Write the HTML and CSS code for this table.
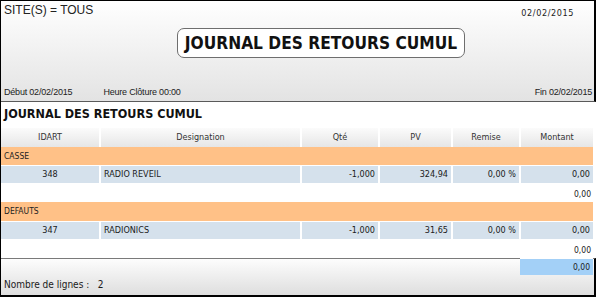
FILE: index.html
```html
<!DOCTYPE html>
<html lang="fr">
<head>
<meta charset="utf-8">
<title>Journal des retours cumul</title>
<link rel="stylesheet" href="styles.css">
</head>
<body>
<div class="frame">
  <header class="head">
    <div class="head-top">
      <span class="site">SITE(S) = TOUS</span>
      <span class="date">02/02/2015</span>
    </div>
    <div class="title-box">JOURNAL DES RETOURS CUMUL</div>
    <div class="head-bottom">
      <span class="debut">Début 02/02/2015</span>
      <span class="heure">Heure Clôture 00:00</span>
      <span class="fin">Fin 02/02/2015</span>
    </div>
  </header>
  <main class="content">
    <h1 class="sec-title">JOURNAL DES RETOURS CUMUL</h1>
    <div class="row row-head">
      <div class="c">IDART</div>
      <div class="c">Designation</div>
      <div class="c">Qté</div>
      <div class="c">PV</div>
      <div class="c">Remise</div>
      <div class="c">Montant</div>
    </div>
    <div class="group">CASSE</div>
    <div class="row row-data">
      <div class="c center">348</div>
      <div class="c left">RADIO REVEIL</div>
      <div class="c right">-1,000</div>
      <div class="c right">324,94</div>
      <div class="c right">0,00 %</div>
      <div class="c right">0,00</div>
    </div>
    <div class="subtotal">0,00</div>
    <div class="group group2">DEFAUTS</div>
    <div class="row row-data">
      <div class="c center">347</div>
      <div class="c left">RADIONICS</div>
      <div class="c right">-1,000</div>
      <div class="c right">31,65</div>
      <div class="c right">0,00 %</div>
      <div class="c right">0,00</div>
    </div>
    <div class="subtotal">0,00</div>
  </main>
  <footer class="foot">
    <div class="total-line"><div class="total">0,00</div></div>
    <div class="count">Nombre de lignes :&nbsp;&nbsp; 2</div>
  </footer>
</div>
</body>
</html>
```

FILE: styles.css
```css
* { box-sizing: border-box; }
html, body { margin: 0; padding: 0; background: #fff; }
body {
  font-family: "DejaVu Sans Condensed", "DejaVu Sans", sans-serif;
  font-stretch: condensed;
  color: #1a1a1a;
}
.frame {
  width: 596px;
  height: 297px;
  border-left: 1px solid #000;
  border-top: 1px solid #000;
  display: flex;
  flex-direction: column;
  overflow: hidden;
}
.head {
  height: 101px;
  flex: none;
  background: linear-gradient(#ffffff, #e3e3e3);
  border-right: 2px solid #000;
  border-bottom: 1px solid #5a5a5a;
  display: flex;
  flex-direction: column;
}
.head-top {
  display: flex;
  justify-content: space-between;
  align-items: flex-start;
  padding: 2px 20px 0 3px;
  height: 27px;
}
.site {
  font-family: "Liberation Sans", Arial, sans-serif;
  font-size: 12px;
  line-height: 14px;
  color: #222;
}
.date {
  font-size: 9px;
  letter-spacing: 0.6px;
  line-height: 11px;
  padding-top: 5px;
  color: #222;
}
.title-box {
  margin-left: 176px;
  width: 288px;
  height: 30px;
  border: 1px solid #6e6e6e;
  border-radius: 7px;
  background: #fff;
  font-weight: bold;
  font-size: 17.2px;
  line-height: 28px;
  text-align: center;
  white-space: nowrap;
  color: #111;
}
.head-bottom {
  display: flex;
  align-items: flex-end;
  margin-top: auto;
  padding: 0 2px 3px 3px;
  font-family: "Liberation Sans", Arial, sans-serif;
  font-size: 9px;
  line-height: 11px;
  color: #222;
  letter-spacing: -0.2px;
}
.heure { margin-left: 31px; }
.fin { margin-left: auto; }
.content {
  height: 156px;
  flex: none;
  background: #fff;
  font-size: 9px;
}
.sec-title {
  margin: 0;
  height: 26px;
  padding: 4px 0 0 3px;
  font-size: 12.5px;
  line-height: 16px;
  font-weight: bold;
  white-space: nowrap;
  color: #111;
}
.row {
  display: grid;
  grid-template-columns: 98px 199px 76px 71px 66px 72px;
  column-gap: 2px;
  width: 592px;
}
.row-head { height: 19px; }
.row-head .c {
  background: linear-gradient(#fbfbfb, #e6e6e6);
  text-align: center;
  line-height: 19px;
  color: #333;
}
.group {
  width: 592px;
  height: 18px;
  background: #ffc187;
  padding-left: 3px;
  line-height: 18px;
  font-size: 8.5px;
  color: #222;
}
.group2 { height: 19px; line-height: 19px; }
.row-data {
  height: 18px;
  border-top: 1px solid #fff;
}
.row-data .c {
  background: #d5e1ec;
  line-height: 17px;
  color: #1a1a1a;
}
.center { text-align: center; }
.left { padding-left: 3px; }
.right { text-align: right; padding-right: 3px; }
.subtotal {
  width: 592px;
  height: 19px;
  text-align: right;
  padding: 6px 2px 0 0;
  line-height: 11px;
  font-size: 8.5px;
}
.foot {
  flex: 1;
  background: linear-gradient(#fdfdfd, #dedede);
  border-top: 1px solid #7a7a7a;
  border-right: 2px solid #000;
  border-bottom: 2px solid #000;
  display: flex;
  flex-direction: column;
}
.total-line {
  display: flex;
  justify-content: flex-end;
  padding-right: 1px;
}
.total {
  width: 73px;
  height: 17px;
  margin-top: -1px;
  border-top: 1px solid #fff;
  background: #a3d0f7;
  text-align: right;
  padding-right: 3px;
  font-size: 8.5px;
  line-height: 16px;
}
.count {
  padding: 4px 0 0 3px;
  font-size: 10px;
  line-height: 12px;
  color: #1a1a1a;
}
```
